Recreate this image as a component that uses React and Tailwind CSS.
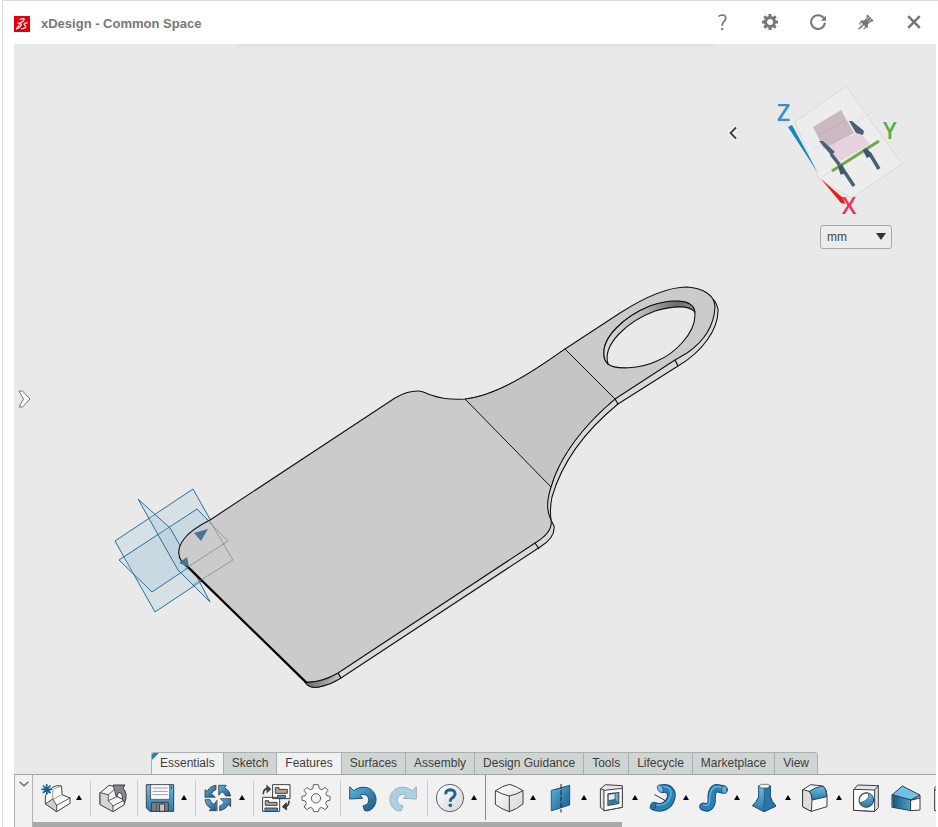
import React, { useState } from "react";

const INK = "#3b3f42";

function Defs() {
  return (
    <svg className="absolute h-0 w-0" aria-hidden="true">
      <defs>
        <linearGradient id="blue" x1="0" y1="0" x2="1" y2="1">
          <stop offset="0" stopColor="#5db4df" />
          <stop offset="1" stopColor="#17598a" />
        </linearGradient>
        <linearGradient id="blueDown" x1="0" y1="0" x2="0" y2="1">
          <stop offset="0" stopColor="#6cbfe6" />
          <stop offset="1" stopColor="#2a76a8" />
        </linearGradient>
        <linearGradient id="blueSide" x1="0" y1="0" x2="1" y2="0">
          <stop offset="0" stopColor="#16547f" />
          <stop offset="1" stopColor="#4ba3d3" />
        </linearGradient>
        <linearGradient id="pale" x1="0" y1="0" x2="1" y2="1">
          <stop offset="0" stopColor="#ffffff" />
          <stop offset="1" stopColor="#d4d6d8" />
        </linearGradient>
        <linearGradient id="wall" x1="0" y1="0" x2="1" y2="0">
          <stop offset="0" stopColor="#dedede" />
          <stop offset="0.45" stopColor="#b5b5b5" />
          <stop offset="0.8" stopColor="#6a6a6a" />
          <stop offset="1" stopColor="#959595" />
        </linearGradient>
        <linearGradient id="corner" x1="0" y1="0" x2="1" y2="0">
          <stop offset="0" stopColor="#666666" />
          <stop offset="1" stopColor="#c8c8c8" />
        </linearGradient>
      </defs>
    </svg>
  );
}

function Icon({ children }) {
  return (
    <svg viewBox="0 0 84 84" className="h-7 w-7 overflow-visible" fill="none" stroke={INK} strokeWidth="3" strokeLinejoin="round" strokeLinecap="round" aria-hidden="true">
      {children}
    </svg>
  );
}

const icons = {
  newPart: (
    <Icon>
      <path d="M14 34 34 10 Q48 2 62 6 L63 32 87 42 V58 L47 83 14 60Z" fill="#fbfbfb" />
      <path d="M62 6 36 16 Q34 30 36 46 L14 60 M36 46 63 32" stroke="#8a8d8f" strokeWidth="2.5" />
      <path d="M14 60 47 83 V64 L36 46Z" fill="#cfd1d2" strokeWidth="2.5" />
      <path d="M47 64 87 42" strokeWidth="2.5" />
      <path d="M17 2V30M3 16H31M7 6 27 26M27 6 7 26" stroke="#1a6291" strokeWidth="5" />
    </Icon>
  ),
  insertPart: (
    <Icon>
      <path d="M4 26 30 4 54 9 V38 L76 48 V62 L42 83 4 62Z" fill="#f4f4f4" />
      <path d="M4 26 28 32 V50 L42 66 V83 L4 62Z" fill="#d3d5d6" strokeWidth="2.5" />
      <path d="M28 32 54 10 M28 50 54 38 M42 66 76 48" strokeWidth="2.5" />
      <path d="M44 3 H78 L72 12 Q88 30 77 56 Q67 47 70 35 Q68 26 60 25 L52 36Z" fill="#85888a" />
    </Icon>
  ),
  save: (
    <Icon>
      <path d="M2 2H83V82H12L2 73Z" fill="url(#blueDown)" />
      <path d="M15 2H71V46H15Z" fill="#fbfbfb" strokeWidth="2" />
      <path d="M21 12H64M21 22H64M21 32H64" stroke="#888" strokeWidth="2.5" />
      <path d="M18 55H67V82H18Z" fill="#71808a" />
      <path d="M31 55V81" strokeWidth="2" />
      <path d="M42 60H56V82H42Z" fill="#c9c1b8" />
      <path d="M76 8V14" strokeWidth="3" />
    </Icon>
  ),
  update: (
    <Icon>
      <g fill="url(#blue)" strokeWidth="2.5">
        <path d="M3 39 V17 L10 22 Q18 5 36 4 V17 Q28 18 22 29 L33 39Z" />
        <path d="M45 4 H67 L62 11 Q77 19 80 36 H65 Q63 28 54 23 L45 33Z" />
        <path d="M80 45 V68 L73 62 Q65 77 47 80 V66 Q56 63 60 55 L50 45Z" />
        <path d="M38 80 H15 L22 74 Q6 66 3 47 H18 Q21 57 30 61 L38 50Z" />
      </g>
    </Icon>
  ),
  swap: (
    <Icon>
      <path d="M33 2H84V44H33Z M3 40H53V82H3Z" fill="#fff" />
      <path d="M41 11H51V16H76V28H41Z M11 50H20V55H45V64H11Z" fill="#b6a48d" />
      <path d="M48 34H70V43H48Z M10 72H46V82H10Z" fill="#3e95cf" />
      <path d="M4 29Q5 14 17 14" strokeWidth="5" />
      <path d="M15 5 26 15 16 25Z" fill={INK} />
      <path d="M81 52Q80 66 71 67" strokeWidth="5" />
      <path d="M72 57 61 68 73 77Z" fill={INK} />
    </Icon>
  ),
  gear: (
    <Icon>
      <path d="M35 2H49L52 14 60 17 70 10 78 19 71 28 74 35 84 37V49L74 51 71 59 78 69 69 77 59 70 52 73 49 83H35L32 73 25 70 15 77 6 69 13 59 10 51 0 49V37L10 35 13 28 6 19 15 10 24 17 32 14Z" fill="#fafafa" stroke="#5d6265" />
      <circle cx="42" cy="43" r="14" fill="#f1f1f1" stroke="#5d6265" />
    </Icon>
  ),
  undo: (
    <Icon>
      <path d="M3 9 14 20 Q32 6 54 11 C86 20 90 62 64 78 Q54 83 47 80 L42 66 C59 62 63 48 56 38 C50 31 42 29 33 34 L41 43 3 45Z" fill="url(#blue)" stroke="#24506b" />
    </Icon>
  ),
  redo: (
    <Icon>
      <path d="M81 9 70 20 Q52 6 30 11 C-2 20 -6 62 20 78 Q30 83 37 80 L42 66 C25 62 21 48 28 38 C34 31 42 29 51 34 L43 43 81 45Z" fill="#aad1e3" stroke="#9fb0ba" />
    </Icon>
  ),
  help: (
    <Icon>
      <circle cx="42" cy="42" r="41" fill="url(#pale)" stroke="#5f6265" />
      <path d="M29 31 Q29 17 43 17 Q58 18 57 31 Q55 39 47 43 Q43 46 43 53" stroke="#1c6594" strokeWidth="9" strokeLinecap="butt" />
      <circle cx="43" cy="64" r="5.5" fill="#1c6594" stroke="none" />
    </Icon>
  ),
  box: (
    <Icon>
      <path d="M2 20 Q22 5 44 1 Q65 7 84 20 V60 Q65 76 43 83 Q20 76 2 62Z" fill="url(#pale)" />
      <path d="M2 20 Q20 31 43 36 Q67 31 84 20 M43 36V83" />
    </Icon>
  ),
  plane: (
    <Icon>
      <path d="M17 19 71 4 V63 L17 80Z" fill="url(#blue)" stroke="#225273" />
      <path d="M45 1V84" stroke="#222" strokeDasharray="12 7" />
    </Icon>
  ),
  frame: (
    <Icon>
      <path d="M11 14 25 2 76 5V70L22 80 11 71Z" fill="#e4e6e8" />
      <path d="M22 19 76 13V70L22 80Z" fill="#fff" />
      <path d="M11 14 22 19" />
      <path d="M33 30 65 26V58L33 64Z" fill="#e6eef3" strokeWidth="4" />
      <path d="M35 50 54 46 64 57 35 62Z" fill="#2b7bb0" stroke="none" />
      <path d="M54 29 64 28V56L54 46Z" fill="#5fb2de" stroke="none" />
      <path d="M54 29V46L64 56 M54 46 35 50" strokeWidth="2" />
    </Icon>
  ),
  revolve: (
    <Icon>
      <path d="M38 15 C62 8 74 24 69 42 C63 66 40 76 17 66" stroke="#174b6f" strokeWidth="26" strokeLinecap="butt" />
      <path d="M38 15 C62 8 74 24 69 42 C63 66 40 76 17 66" stroke="#2b80b3" strokeWidth="20" strokeLinecap="butt" />
      <path d="M42 9 C66 4 74 24 66 40 C58 60 38 68 19 61" stroke="#58afd9" strokeWidth="5" />
      <ellipse cx="37" cy="14" rx="8" ry="12" fill="#6abbe3" stroke="#174b6f" strokeWidth="2" transform="rotate(-25 37 14)" />
      <ellipse cx="15" cy="66" rx="8" ry="12" fill="#2774a5" stroke="#174b6f" strokeWidth="2" transform="rotate(20 15 66)" />
      <path d="M20 32 54 51" stroke="#333" />
    </Icon>
  ),
  sweep: (
    <Icon>
      <path d="M13 68 C32 76 39 60 38 44 C37 24 44 9 58 13 L74 17" stroke="#164e75" strokeWidth="25" />
      <path d="M13 68 C32 76 39 60 38 44 C37 24 44 9 58 13 L74 17" stroke="#2b80b3" strokeWidth="19" />
      <path d="M14 63 C28 68 33 56 32 42 C32 22 42 5 58 8 L68 11" stroke="#58afd9" strokeWidth="5" />
      <ellipse cx="76" cy="17" rx="8" ry="11" fill="#5fb2de" stroke="#164e75" strokeWidth="2" />
    </Icon>
  ),
  loft: (
    <Icon>
      <path d="M26 7 V39 Q19 55 7 65 L42 83 78 66 Q65 53 61 38 V7Z" fill="url(#blueDown)" stroke="#184b6c" />
      <path d="M43 12 V40 Q41 62 42 83 L78 66 Q65 53 61 38 V7Z" fill="#2b76a6" stroke="#184b6c" strokeWidth="2" />
      <path d="M26 6 35 1H53L61 6 52 12H34Z" fill="#f4f7f8" strokeWidth="2" />
    </Icon>
  ),
  fillet: (
    <Icon>
      <path d="M6 17 29 2 66 6 Q78 16 78 36 V68 L31 82 6 69Z" fill="#f8f8f8" />
      <path d="M6 17 25 22 Q33 31 33 48 L31 82 6 69Z" fill="#dcdee0" />
      <path d="M25 22 Q40 10 66 6 Q78 18 77 38 L34 48 Q33 30 25 22Z" fill="url(#blueDown)" />
    </Icon>
  ),
  hole: (
    <Icon>
      <path d="M6 16 17 3 79 5V71L68 82 6 79Z" fill="#e1e3e4" />
      <path d="M6 16 68 18V82L6 79Z" fill="#fff" />
      <path d="M68 18 79 5" />
      <circle cx="43" cy="48" r="22" fill="url(#blueDown)" />
      <path d="M23 56 C19 40 31 26 49 28 Q54 50 23 56Z" fill="#fff" strokeWidth="2" />
    </Icon>
  ),
  draft: (
    <Icon>
      <path d="M1 32 31 6 84 33 57 48Z" fill="#6fc1e8" />
      <path d="M1 32 57 48V80L1 70Z" fill="url(#blueSide)" />
      <path d="M57 48 84 41V78L57 80Z" fill="#fff" />
      <path d="M57 48 84 33V41Z" fill="#6fc1e8" />
    </Icon>
  ),
  shell: (
    <Icon>
      <path d="M9 10 18 3H76V70L66 80H9Z" fill="url(#pale)" />
      <path d="M9 18H66V80 M66 18 76 3" />
    </Icon>
  ),
};

function Tool({ name, label, menu }) {
  return (
    <div className="flex shrink-0 items-center">
      <button type="button" aria-label={label} className="flex h-10 w-10 items-center justify-center">
        {icons[name]}
      </button>
      {menu && (
        <button type="button" aria-label={label + " options"} className="flex h-10 w-[11px] items-center pl-px">
          <svg viewBox="0 0 6 5" className="h-[5px] w-[6px]" aria-hidden="true">
            <path d="M3 0 6 5H0Z" fill="#000" />
          </svg>
        </button>
      )}
    </div>
  );
}

function Divider() {
  return <div className="mr-[2px] ml-1 h-9 w-px shrink-0 bg-[#cccccc]" />;
}

function HeaderButton({ label, children }) {
  return (
    <button type="button" aria-label={label} className="flex h-full w-12 items-center justify-center text-[#777777]">
      {children}
    </button>
  );
}

function Header() {
  return (
    <header className="flex h-[43px] shrink-0 items-center">
      <svg viewBox="0 0 16 16" className="mt-[2px] ml-[11px] h-4 w-4" aria-hidden="true">
        <rect width="16" height="16" fill="#e2000f" />
        <g fill="none" stroke="#fff" strokeWidth="1.2" strokeLinecap="round" strokeLinejoin="round">
          <path d="M6 3.2 Q11 1.6 10 4 Q9 5.7 6.7 6.6" />
          <path d="M4 7.2 Q8.5 7.4 6.7 10 Q5.3 12.4 2.5 12.8 L5.2 9" />
          <path d="M13.2 6.8 Q9.5 6.8 10.2 8.6 L11.8 10.3 Q12 12.4 7.6 12.6" />
        </g>
      </svg>
      <h1 className="mt-[2px] ml-[11px] text-[13px] leading-4 font-bold text-[#777777]">xDesign - Common Space</h1>
      <div className="ml-auto flex h-full pb-[2px]">
        <HeaderButton label="Help">
          <svg viewBox="0 0 20 20" className="h-5 w-5" fill="none" stroke="currentColor" aria-hidden="true">
            <path d="M6.5 4.5 Q8 3 10.2 3 Q14 3.2 13.7 6.5 Q13.4 8.4 11.7 9.8 Q10.2 11 10.2 13.7" strokeWidth="1.7" />
            <circle cx="10.2" cy="17" r="1.2" fill="currentColor" stroke="none" />
          </svg>
        </HeaderButton>
        <HeaderButton label="Settings">
          <svg viewBox="0 0 16 16" className="h-4 w-4" fill="none" stroke="currentColor" aria-hidden="true">
            <circle cx="8" cy="8" r="4.5" strokeWidth="3" />
            <path d="M8 0V3M8 13V16M0 8H3M13 8H16M2.3 2.3 4.5 4.5M11.5 11.5 13.7 13.7M13.7 2.3 11.5 4.5M4.5 11.5 2.3 13.7" strokeWidth="3" />
          </svg>
        </HeaderButton>
        <HeaderButton label="Refresh">
          <svg viewBox="0 0 16 16" className="h-4 w-4" fill="none" stroke="currentColor" aria-hidden="true">
            <path d="M13.6 4 A6.9 6.9 0 1 0 14.9 8.6" strokeWidth="2" />
            <path d="M16 1.6V6.8H10.8Z" fill="currentColor" stroke="none" />
          </svg>
        </HeaderButton>
        <HeaderButton label="Pin">
          <svg viewBox="0 0 16 16" className="h-4 w-4" fill="none" stroke="currentColor" aria-hidden="true">
            <path d="M9.5 0.5 15.5 6.5 14 8 13 7.4 9.8 10.4 10 13 8.8 14 2.3 7.4 3.4 6.3 6 6.5 9 3.3 8.2 2Z" fill="currentColor" stroke="none" />
            <path d="M5.8 10.2 0.7 15.3" strokeWidth="1.6" />
            <path d="M8.5 5.8 11.6 3 M10.5 7.8 13.2 5.2" stroke="#fff" strokeWidth="0.8" />
            <path d="M2.5 10.7 Q1 9 3 8.2 M5.5 14.8 Q8 14.5 7.2 12.3" strokeWidth="1.2" />
          </svg>
        </HeaderButton>
        <HeaderButton label="Close">
          <svg viewBox="0 0 14 14" className="h-[14px] w-[14px]" fill="none" stroke="currentColor" strokeWidth="2.6" aria-hidden="true">
            <path d="M1.2 1.2 12.8 12.8M12.8 1.2 1.2 12.8" />
          </svg>
        </HeaderButton>
      </div>
    </header>
  );
}

const HOLE = "M604 355 C602 337 625 316 650 306 C670 299 695 298 695 315 C695 334 674 354 657 361 C640 369 615 370 608 364 Q604 360 604 355Z";

function Model() {
  return (
    <svg viewBox="14 44 922 730" preserveAspectRatio="xMidYMid slice" className="absolute inset-0 h-full w-full" role="img" aria-label="Cutting board with handle" strokeLinejoin="round">
      <g fill="#9fc6da" fillOpacity="0.24" stroke="#2a6f99" strokeWidth="1">
        <path d="M193 489 115 541 155 612 233 560Z" />
        <path d="M197 509 119 560 152 592 228 541Z" />
        <path d="M138 499 170 528 Q186 555 210 602 L178 570Z" />
      </g>
      <path d="M305 682 Q309 689 319 687 Q330 685 341 678 L540 547 C550 541 555 534 554 526 L551 520 C550 512 550 506 552 497 C562 462 585 431 618 404 L678 366 C702 352 719 329 718 309 Q717 304 714 300 L305 682Z" fill="#dadada" stroke="#111" strokeWidth="1.1" />
      <path d="M305 682 Q321 683 338 673 L341 678 Q330 685 319 687 Q309 689 305 682Z" fill="url(#corner)" stroke="#111" strokeWidth="1" />
      <path d="M305 682 182 562 C177 555 178 547 184 539 C190 531 200 525 210 520 L395 398 C403 393 412 391 418 391 C424 391 426 394 431 395 C442 399 452 400 465 399 C495 396 530 374 565 349 L620 313 C645 297 668 287 687 287 C704 288 715 296 715 307 C714 326 703 342 687 353 L675 360 615 399 C586 423 560 455 551 487 C547 500 546 510 551 520 C553 530 545 537 535 543 L338 673 Q321 683 305 682Z" fill="#cbcbcb" stroke="#111" strokeWidth="1.1" />
      <path d="M465 399 C495 396 530 374 565 349 L615 399 C586 423 560 455 551 487Z" fill="#c5c5c5" stroke="#111" strokeWidth="1" />
      <path d={HOLE} fill="#e9e9e9" stroke="#111" strokeWidth="1.1" />
      <path d="M608 364 Q604 360 604 355 C602 337 625 316 650 306 C670 299 693 298 695 312 C689 305 673 306 655 311 C628 321 602 344 608 364Z" fill="url(#wall)" stroke="#111" strokeWidth="1.1" />
      <path d="M675 360 678 366 M615 399 618 404 M535 543 539 549 M338 673 341 678" stroke="#111" strokeWidth="1.2" />
      <path d="M182 561 307 683" stroke="#000" strokeWidth="1.8" />
      <path d="M206 519 228 541 185 569 M210 521 233 560 193 585" fill="none" stroke="#6e7f8a" strokeOpacity="0.65" />
      <path d="M194 533 208 529 201 541Z M179 563 187 557 189 567Z" fill="#43789b" />
    </svg>
  );
}

function ViewCube() {
  return (
    <svg viewBox="776 84 128 140" className="h-[140px] w-32 overflow-visible" role="img" aria-label="View orientation">
      <path d="M846 86 902 164 852 198 819 179 795 122Z" fill="#ededed" stroke="#d6d6d6" strokeWidth="0.8" />
      <path d="M813 150 872 112 M819 179 872 144" stroke="#cbdde0" strokeWidth="0.8" />
      <path d="M813 127 841 110 854 133 824 149Z" fill="#cbb9c2" />
      <path d="M818 136 846 120 M826 149 851 136" stroke="#b6abb5" strokeWidth="0.7" />
      <path d="M826 149 859 132 870 144 837 163Z" fill="#e6d3dd" />
      <path d="M849 121 852 121 864 131 863 135 856 133Z M819 141 823 141 835 152 831 155Z" fill="#486274" />
      <path d="M831 154 842 168 854 186 M864 149 870 154 879 169" fill="none" stroke="#486274" strokeWidth="3.5" />
      <path d="M832 171 879 141" stroke="#6faa4c" strokeWidth="3" />
      <path d="M840 165 843 174 M865 149 869 157" stroke="#3f5869" strokeWidth="5" />
      <path d="M788 127 792 125 818 173Z" fill="#1687b9" />
      <path d="M821 179 843 198 845 204 841 203Z" fill="#e41d22" />
      <g fontFamily="Open Sans, sans-serif" fontWeight="600" fontSize="23" stroke-linejoin="round">
        <text x="777" y="121" fill="#358ecb">Z</text>
        <text x="883" y="139" fill="#51b347">Y</text>
        <text x="842" y="214" fill="#ee315a">X</text>
      </g>
    </svg>
  );
}

const tabs = ["Essentials", "Sketch", "Features", "Surfaces", "Assembly", "Design Guidance", "Tools", "Lifecycle", "Marketplace", "View"];

function Tabs() {
  const [active, setActive] = useState("Features");
  return (
    <nav className="relative mt-auto flex justify-center pl-[19px]" role="tablist" aria-label="Tool sections">
      <div className="flex overflow-hidden rounded-t-[3px] border-t border-l border-[#aab0ae]">
        {tabs.map((tab) => (
          <button
            key={tab}
            type="button"
            role="tab"
            aria-selected={tab === active}
            onClick={() => setActive(tab)}
            className={
              "relative h-[21px] border-r border-[#aab0ae] px-2 pb-[2px] text-xs leading-4 whitespace-nowrap text-[#3d3d3d] " +
              (tab === active || tab === "Essentials" ? "bg-[#f1f1f1]" : "bg-[#cfd5d3]")
            }
          >
            {tab === "Essentials" && <span className="absolute top-0 left-0 border-t-[7px] border-r-[7px] border-t-[#2881b4] border-r-transparent" />}
            {tab}
          </button>
        ))}
      </div>
    </nav>
  );
}

function Toolbar() {
  return (
    <footer className="flex h-[53px] shrink-0 border-t border-[#a5a5a5] bg-[#f1f1f1]">
      <button type="button" aria-label="Collapse toolbar" className="flex w-[19px] shrink-0 justify-center border-x border-[#b2b2b2] pt-[6px]">
        <svg viewBox="0 0 10 6" className="h-[6px] w-[10px]" fill="none" stroke="#666" strokeWidth="1.3" aria-hidden="true">
          <path d="M0.5 0.8 5 4.8 9.5 0.8" />
        </svg>
      </button>
      <div className="flex min-w-0 flex-1 flex-col justify-between">
        <div className="flex h-[45px] items-center overflow-hidden pl-[2px]">
          <Tool name="newPart" label="New component" menu />
          <Divider />
          <Tool name="insertPart" label="Insert" />
          <Divider />
          <Tool name="save" label="Save" menu />
          <Divider />
          <Tool name="update" label="Update" menu />
          <Divider />
          <Tool name="swap" label="Replace" />
          <Tool name="gear" label="Options" />
          <Divider />
          <Tool name="undo" label="Undo" />
          <Tool name="redo" label="Redo" />
          <Divider />
          <Tool name="help" label="Help" menu />
          <div className="mr-[3px] ml-1 h-full w-px shrink-0 bg-[#888888]" />
          <Tool name="box" label="Extrude" menu />
          <Tool name="plane" label="Plane" menu />
          <Tool name="frame" label="Cut" menu />
          <Tool name="revolve" label="Revolve" menu />
          <Tool name="sweep" label="Sweep" menu />
          <Tool name="loft" label="Loft" menu />
          <Tool name="fillet" label="Fillet" menu />
          <Tool name="hole" label="Hole" />
          <Tool name="draft" label="Draft" />
          <Tool name="shell" label="Shell" />
        </div>
        <div className="h-[5px] bg-[#f1f1f1]">
          <div className="h-full w-[65.2%] bg-[#a9a9a9]" />
        </div>
      </div>
    </footer>
  );
}

export default function App() {
  return (
    <div className="flex h-screen flex-col bg-white pl-[2px] font-['Liberation_Sans',Arial,sans-serif]">
      <Defs />
      <div className="flex min-h-0 flex-1 flex-col border-t border-l border-[#dcdcdc]">
        <Header />
        <div className="mr-[2px] ml-[11px] flex min-h-0 flex-1 flex-col">
          <main className="relative flex min-h-0 flex-1 flex-col overflow-hidden bg-[#e9e9e9]">
            <Model />
            <div className="absolute top-0 left-1/2 h-1 w-[480px] -translate-x-1/2 bg-linear-to-b from-[#dedede] to-[#e9e9e9]" />
            <button type="button" aria-label="Open tree" className="absolute top-[346px] left-1">
              <svg viewBox="0 0 13 18" className="h-[18px] w-[13px]" aria-hidden="true">
                <path d="M1 1H4.5L12 9 4.5 17H1L5.5 9Z" fill="#fafafa" stroke="#777" strokeLinejoin="round" />
              </svg>
            </button>
            <div className="absolute top-10 right-8 flex items-start">
              <button type="button" aria-label="Show view options" className="mt-[42px] mr-[38px]">
                <svg viewBox="0 0 10 14" className="h-[14px] w-[10px]" fill="none" stroke="#fff" strokeWidth="5" aria-hidden="true">
                  <path d="M8 1.5 2.5 7 8 12.5" strokeOpacity="0.6" />
                  <path d="M8 1.5 2.5 7 8 12.5" stroke="#444" strokeWidth="2" />
                </svg>
              </button>
              <div className="flex flex-col items-end">
                <ViewCube />
                <div className="relative mr-3">
                  <select aria-label="Units" defaultValue="mm" className="h-6 w-[72px] appearance-none rounded-[3px] border border-[#a8a8a8] bg-[#ececec] pl-[6px] text-xs text-[#444444]">
                    <option>mm</option>
                    <option>cm</option>
                    <option>in</option>
                  </select>
                  <svg viewBox="0 0 10 7" className="pointer-events-none absolute top-[9px] right-[6px] h-[7px] w-[10px]" aria-hidden="true">
                    <path d="M0 0H10L5 7Z" fill="#333" />
                  </svg>
                </div>
              </div>
            </div>
            <Tabs />
          </main>
          <Toolbar />
        </div>
      </div>
    </div>
  );
}
